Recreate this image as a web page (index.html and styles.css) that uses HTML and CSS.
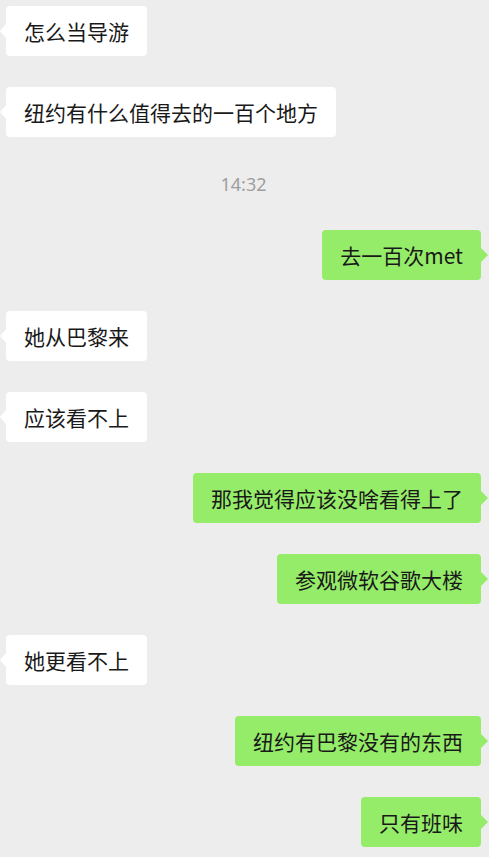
FILE: index.html
```html
<!DOCTYPE html>
<html lang="zh-CN">
<head>
    <meta charset="UTF-8">
    <meta name="viewport" content="width=device-width, initial-scale=1.0">
    <title>聊天</title>
    <link rel="stylesheet" href="styles.css">
</head>
<body>
    <div class="chat">
        <div class="row left"><div class="bubble">怎么当导游</div></div>
        <div class="row left"><div class="bubble">纽约有什么值得去的一百个地方</div></div>

        <!-- time divider -->
        <div class="time">14:32</div>

        <div class="row right"><div class="bubble">去一百次met</div></div>
        <div class="row left"><div class="bubble">她从巴黎来</div></div>
        <div class="row left"><div class="bubble">应该看不上</div></div>
        <div class="row right"><div class="bubble">那我觉得应该没啥看得上了</div></div>
        <div class="row right"><div class="bubble">参观微软谷歌大楼</div></div>
        <div class="row left"><div class="bubble">她更看不上</div></div>
        <div class="row right"><div class="bubble">纽约有巴黎没有的东西</div></div>
        <div class="row right"><div class="bubble">只有班味</div></div>
    </div>
</body>
</html>
```

FILE: styles.css
```css
body {
    margin: 0;
    background-color: #ededed; /* wechat chat background */
    font-family: "Noto Sans CJK SC", "Noto Sans", sans-serif;
    color: #191919;
}

.chat {
    display: flex;
    flex-direction: column;
    gap: 31px;
    padding: 6px 8px 10px 6px;
}

.row {
    display: flex;
}

.row.right {
    justify-content: flex-end;
}

.bubble {
    position: relative;
    height: 50px;
    line-height: 50px;
    padding: 0 18px;
    font-size: 21px;
    border-radius: 4px;
    white-space: nowrap;
}

.left .bubble {
    background-color: #ffffff;
}

.right .bubble {
    background-color: #95ec69;
}

.right .bubble.wide {
    padding-left: 20px;
}

/* little tails */
.bubble::before {
    content: "";
    position: absolute;
    top: 50%;
    margin-top: -7px;
    border-top: 7px solid transparent;
    border-bottom: 7px solid transparent;
}

.left .bubble::before {
    left: -6px;
    border-right: 6px solid #ffffff;
}

.right .bubble::before {
    right: -7px;
    border-left: 7px solid #95ec69;
}

.time {
    height: 31px;
    line-height: 33px;
    text-align: center;
    font-size: 18px;
    color: #9e9e9e;
    font-family: "Noto Sans", "Noto Sans CJK SC", sans-serif;
}
```
